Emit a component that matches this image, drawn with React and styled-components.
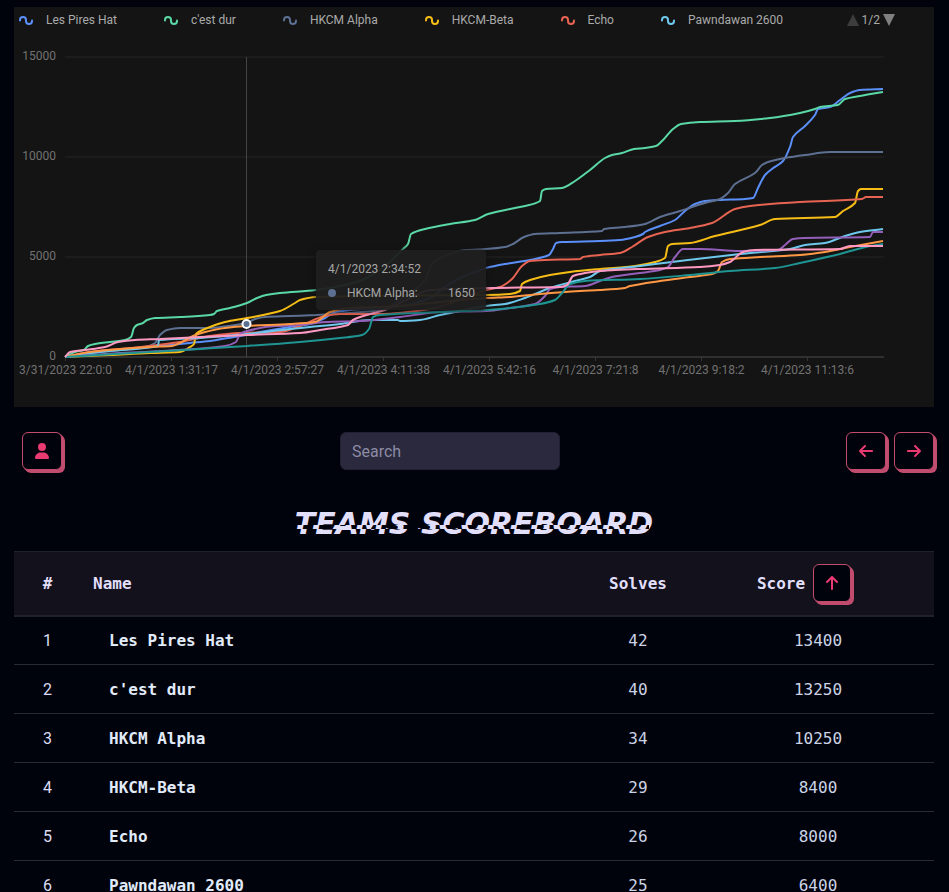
import React, { useState } from "react";
import styled, { createGlobalStyle } from "styled-components";
import { FaArrowLeft, FaArrowRight, FaArrowUp, FaUser } from "react-icons/fa6";

const GlobalStyle = createGlobalStyle`
* {
  box-sizing: border-box;
}
body {
  margin: 0;
  background: #01030c;
  color: #e2dffb;
  font-family: Roboto, "Liberation Sans", sans-serif;
  font-size: 16px;
}
`

const Page = styled.main`
padding: 7px 15px 0 14px;
`

const Chart = styled.section`
position: relative;
background: #141414;

> svg {
  display: block;
  width: 100%;
  height: auto;
}
`

const Legend = styled.div`
display: flex;
align-items: center;
justify-content: space-between;
height: 26px;
padding: 0 39px 0 5px;
font-size: 12px;
color: #aaaaaa;
`

const LegendList = styled.ul`
display: flex;
gap: 47px;
list-style: none;
margin: 0;
padding: 0;
`

const LegendItem = styled.li`
display: flex;
align-items: center;
gap: 13px;
white-space: nowrap;
`

const Pager = styled.div`
display: flex;
align-items: center;
gap: 3px;
`

const PagerButton = styled.button`
display: flex;
padding: 0;
border: 0;
background: none;
color: ${({ $off }) => ($off ? "#3d3d3d" : "#808080")};
`

const Tooltip = styled.div`
position: absolute;
left: 302px;
top: 243px;
width: 170px;
padding: 11px 11px 9px 12px;
border-radius: 4px;
background: rgba(31, 31, 31, 0.95);
box-shadow: 0 0 6px #101010;
color: #a6a6a6;
font-size: 12px;
line-height: 16px;
`

const TooltipRow = styled.div`
display: flex;
align-items: center;
margin-top: 8px;
`

const Dot = styled.span`
width: 8px;
height: 8px;
margin-right: 11px;
border-radius: 50%;
background: #5d7092;
`

const TooltipValue = styled.span`
margin-left: auto;
`

const Controls = styled.div`
display: flex;
align-items: center;
justify-content: space-between;
padding: 25px 0 0 8px;
`

const ButtonGroup = styled.div`
display: flex;
gap: 8px;
padding-left: 8px;
`

const IconButton = styled.button`
display: flex;
align-items: center;
justify-content: center;
width: ${({ $small }) => ($small ? "38px" : "40px")};
height: 38px;
padding: 0;
border: 1px solid #c14c6e;
border-radius: 6px;
background: #01030c;
box-shadow: 1px 1px 0 #c14c6e, 2px 2px 0 #c14c6e, 3px 3px 0 #c14c6e;
color: #ea3a72;
font-size: 16px;
cursor: pointer;
`

const Search = styled.input`
width: 220px;
height: 38px;
padding: 0 11px;
border: 1px solid #222133;
border-radius: 6px;
background: #2a293d;
color: #e2dffb;
font-family: inherit;
font-size: 16px;

&::placeholder {
  color: #8d8ba5;
  opacity: 1;
}
`

const Title = styled.h1`
display: flex;
justify-content: center;
margin: 34px 0 7px;
font-family: "DejaVu Sans", "Liberation Sans", sans-serif;
font-size: 30px;
font-style: italic;
font-weight: 900;
line-height: 40px;
text-transform: uppercase;
`

// a thin band of the word is shifted sideways for the glitch look
const Glitch = styled.span`
position: relative;

&::after {
  content: attr(data-text);
  position: absolute;
  top: 0;
  left: -4px;
  width: 100%;
  background: #01030c;
  clip-path: inset(21px 0 15px 0);
  white-space: nowrap;
}
`

const Table = styled.table`
width: 100%;
table-layout: fixed;
border-collapse: collapse;
font-family: "DejaVu Sans Mono", "Liberation Mono", monospace;
`

const HeadCell = styled.th`
width: ${({ $width }) => $width || "auto"};
height: 64px;
padding: 0 12px;
border-top: 1px solid #20212d;
border-bottom: 2px solid #20212d;
background: #12111c;
text-align: ${({ $align }) => $align || "center"};
`

const Sort = styled.div`
display: flex;
align-items: center;
justify-content: center;
gap: 8px;
padding-right: 28px;
`

const Cell = styled.td`
height: 49px;
padding: 0;
border-bottom: 1px solid #262a36;
color: #ccd3e6;
text-align: center;
`

const Rank = styled(Cell)`
font-family: Roboto, "Liberation Sans", sans-serif;
color: #dcdcf4;
`

const Name = styled(Cell)`
padding-left: 28px;
color: #e1ebfa;
font-weight: bold;
text-align: left;
`

const series = [
  { name: "Les Pires Hat", color: "#5B8FF9", points: "65,357 90,353 130,349 160,346 190,343 210,341 222,339 240,336 260,332 290,327 310,324 325,318 335,312 350,310 400,306 430,298 445,287 460,278 475,272 486,268 505,264 530,260 549,255 553,249 556,243 562,242 600,241 620,240 635,237 643,234 645,232 660,226 675,220 685,211 695,204 705,201 720,200 745,199 753,198 758,188 765,175 772,169 783,161 790,147 793,137 805,126 815,115 818,109 830,107 840,100 850,93 860,90 883,89" },
  { name: "c'est dur", color: "#5AD8A6", points: "65,357 75,352 84,350 88,346 95,344 110,342 125,340 131,337 134,328 137,325 143,323 147,320 155,318 180,317 210,315 214,314 217,311 230,308 247,303 257,298 266,295 280,293 316,290 360,281 385,266 403,249 408,244 411,234 425,229 450,224 475,220 488,214 510,209 525,206 540,201 542,191 546,189 562,188 575,181 590,170 605,158 612,155 622,153 634,149 645,148 656,146 662,141 673,129 681,124 700,122 735,121 770,118 800,113 815,109 820,107 838,105 845,99 860,96 883,92" },
  { name: "HKCM Alpha", color: "#5D7092", points: "65,357 90,353 120,350 145,347 155,343 160,335 167,330 180,328 210,328 235,325 247,323 255,319 265,317 290,316 316,315 350,313 380,310 400,300 425,280 432,264 445,256 465,250 486,249 505,247 513,244 524,237 535,234 560,233 602,231 604,229 625,227 645,224 660,217 680,211 705,203 720,199 728,193 735,184 755,173 762,165 768,162 785,158 805,155 830,152 883,152" },
  { name: "HKCM-Beta", color: "#F6BD16", points: "65,357 110,355 150,353 180,352 190,347 194,344 196,334 205,329 225,322 247,318 280,311 295,303 300,300 316,297 360,296 486,295 510,294 520,291 522,284 530,280 550,275 570,272 600,269 635,266 655,262 665,258 668,246 672,244 690,243 715,236 760,225 775,219 835,217 843,211 855,203 858,191 861,189 883,189" },
  { name: "Echo", color: "#E86452", points: "65,357 90,352 140,347 180,342 210,336 240,333 280,332 300,326 325,316 340,314 380,314 430,309 470,296 486,290 500,287 512,279 522,266 530,261 545,260 580,259 583,257 600,255 620,253 632,247 648,237 665,232 690,228 712,223 735,209 750,206 800,202 862,199 866,197 883,197" },
  { name: "Pawndawan 2600", color: "#6DC8EC", points: "65,357 100,352 158,346 159,340 200,338 247,334 290,329 310,327 340,324 370,320 398,320 400,321 420,320 440,315 460,311 486,306 505,304 525,298 550,288 575,281 590,277 600,271 640,266 680,261 740,254 790,249 805,245 825,243 845,236 860,232 883,229" },
  { color: "#945FB9", points: "65,357 120,353 180,350 225,346 236,342 240,334 247,331 275,326 300,325 325,322 360,321 400,317 440,312 486,311 510,308 535,304 545,296 550,289 560,287 585,286 600,281 612,277 640,273 660,270 668,267 675,257 683,249 700,249 740,251 778,250 785,245 793,239 805,238 870,237 873,232 883,232" },
  { color: "#FF9845", points: "65,357 90,352 150,347 172,346 180,343 193,336 205,332 225,328 247,326 290,324 315,322 330,312 350,308 400,306 430,303 486,298 510,297 540,294 580,291 600,290 625,288 630,286 660,281 690,277 712,274 718,271 722,262 730,259 760,257 800,255 825,252 850,247 883,241" },
  { color: "#1E9493", points: "65,357 150,352 200,349 247,346 300,342 340,338 362,335 369,329 373,317 380,315 440,312 486,310 510,308 540,304 555,300 562,293 570,284 585,281 640,279 690,275 730,271 775,268 800,263 840,254 870,246 883,244" },
  { color: "#FF99C3", points: "65,357 70,352 85,350 105,347 118,342 135,340 160,339 200,337 247,335 300,333 320,330 348,325 353,320 370,314 385,310 410,298 430,290 486,288 560,287 567,285 573,276 585,273 600,271 640,269 700,267 720,265 730,262 743,252 755,250 840,249 850,246 883,246" },
]

const times = ["3/31/2023 22:0:0", "4/1/2023 1:31:17", "4/1/2023 2:57:27", "4/1/2023 4:11:38", "4/1/2023 5:42:16", "4/1/2023 7:21:8", "4/1/2023 9:18:2", "4/1/2023 11:13:6"]

const teams = [
  { name: "Les Pires Hat", solves: 42, score: 13400 },
  { name: "c'est dur", solves: 40, score: 13250 },
  { name: "HKCM Alpha", solves: 34, score: 10250 },
  { name: "HKCM-Beta", solves: 29, score: 8400 },
  { name: "Echo", solves: 26, score: 8000 },
  { name: "Pawndawan 2600", solves: 25, score: 6400 },
]

// monotone cubic through all points, so a line never overshoots a score
function smooth(points) {
  const p = points.split(" ").map((s) => s.split(",").map(Number))
  const slope = p.slice(1).map((b, i) => (b[1] - p[i][1]) / (b[0] - p[i][0]))
  const tangent = p.map((_, i) => {
    const a = slope[i - 1]
    const b = slope[i]
    if (a === undefined) return b
    if (b === undefined) return a
    return a * b <= 0 ? 0 : (2 * a * b) / (a + b)
  })
  let d = `M${p[0]}`
  for (let i = 1; i < p.length; i++) {
    const [x0, y0] = p[i - 1]
    const [x1, y1] = p[i]
    const h = (x1 - x0) / 3
    d += `C${x0 + h},${y0 + h * tangent[i - 1]} ${x1 - h},${y1 - h * tangent[i]} ${x1},${y1}`
  }
  return d
}

function ScoreChart() {
  return (
    <Chart>
      <Legend>
        <LegendList>
          {series.filter((s) => s.name).map((s) => (
            <LegendItem key={s.name}>
              <svg width="14" height="10" viewBox="0 0 14 10" fill="none" stroke={s.color} strokeWidth="2" aria-hidden="true">
                <path d="M1 5.5V5a3 3 0 0 1 6 0v1a3 3 0 0 0 6 0v-.5" strokeLinecap="round" />
              </svg>
              {s.name}
            </LegendItem>
          ))}
        </LegendList>
        <Pager>
          <PagerButton $off aria-label="Previous legend page">
            <svg width="12" height="12" viewBox="0 0 12 12" fill="currentColor"><path d="M6 0l6 12H0z" /></svg>
          </PagerButton>
          1/2
          <PagerButton aria-label="Next legend page">
            <svg width="12" height="12" viewBox="0 0 12 12" fill="currentColor"><path d="M0 0h12L6 12z" /></svg>
          </PagerButton>
        </Pager>
      </Legend>
      <svg viewBox="14 33 920 374" role="img" aria-label="Score over time">
        {[57, 157, 257].map((y) => (
          <path key={y} d={`M65 ${y}H884`} stroke="#1c1c1c" strokeWidth="2" />
        ))}
        <path d="M65 357H884" stroke="#303030" strokeWidth="2" />
        <g fill="#727272" fontSize="12">
          {[15000, 10000, 5000, 0].map((v, i) => (
            <text key={v} x="56" y={60 + i * 100} textAnchor="end">{v}</text>
          ))}
          {times.map((t, i) => (
            <React.Fragment key={t}>
              <path d={`M${65.5 + i * 106} 357v4`} stroke="#343434" />
              <text x={65.5 + i * 106} y="374" textAnchor="middle">{t}</text>
            </React.Fragment>
          ))}
        </g>
        <path d="M246.5 57V357" stroke="#444444" />
        {series.map((s) => (
          <path key={s.color} d={smooth(s.points)} fill="none" stroke={s.color} strokeWidth="2" strokeLinejoin="bevel" />
        ))}
        <circle cx="246.5" cy="324" r="4" fill="#5d7092" stroke="#ffffff" strokeWidth="2" />
      </svg>
      <Tooltip role="tooltip">
        4/1/2023 2:34:52
        <TooltipRow>
          <Dot />
          HKCM Alpha:
          <TooltipValue>1650</TooltipValue>
        </TooltipRow>
      </Tooltip>
    </Chart>
  )
}

function App() {
  const [search, setSearch] = useState("")
  const rows = teams
    .map((team, i) => ({ ...team, rank: i + 1 }))
    .filter((team) => team.name.toLowerCase().includes(search.toLowerCase()))

  return (
    <>
      <GlobalStyle />
      <Page>
        <ScoreChart />
        <Controls>
          <IconButton aria-label="Users"><FaUser /></IconButton>
          <Search
            type="text"
            placeholder="Search"
            aria-label="Search"
            value={search}
            onChange={(e) => setSearch(e.target.value)}
          />
          <ButtonGroup>
            <IconButton aria-label="Previous page"><FaArrowLeft /></IconButton>
            <IconButton aria-label="Next page"><FaArrowRight /></IconButton>
          </ButtonGroup>
        </Controls>
        <Title><Glitch data-text="Teams Scoreboard">Teams Scoreboard</Glitch></Title>
        <Table>
          <thead>
            <tr>
              <HeadCell $width="67px">#</HeadCell>
              <HeadCell $align="left">Name</HeadCell>
              <HeadCell $width="128px">Solves</HeadCell>
              <HeadCell $width="232px">
                <Sort>
                  Score
                  <IconButton $small aria-label="Sort by score"><FaArrowUp /></IconButton>
                </Sort>
              </HeadCell>
            </tr>
          </thead>
          <tbody>
            {rows.map((team) => (
              <tr key={team.name}>
                <Rank>{team.rank}</Rank>
                <Name>{team.name}</Name>
                <Cell>{team.solves}</Cell>
                <Cell>{team.score}</Cell>
              </tr>
            ))}
          </tbody>
        </Table>
      </Page>
    </>
  )
}

export default App;
